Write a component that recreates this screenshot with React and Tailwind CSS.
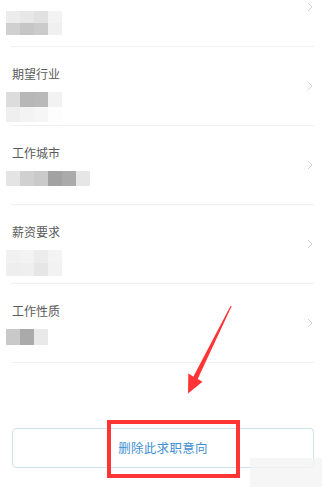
import React from "react";

const Chevron = () => (
  <svg width="6" height="10" viewBox="0 0 6 10" className="shrink-0">
    <path d="M1 1 L5 5 L1 9" fill="none" stroke="#d2d2d2" strokeWidth="1" />
  </svg>
);

const Mosaic = ({ rows, w = 14, h = 13 }) => (
  <div className="flex flex-col -ml-[6px]">
    {rows.map((r, i) => (
      <div key={i} className="flex">
        {r.map((c, j) => (
          <div key={j} style={{ background: c, width: w, height: h }} />
        ))}
      </div>
    ))}
  </div>
);

const Row = ({ label, mosaic, h = 14 }) => (
  <div className="ml-[11px] mr-[13px] h-[79px] flex items-center border-b border-[#f1f1f1]">
    <div className="flex-1 self-stretch pt-[19px] pl-[1px]">
      <div className="text-[12px] leading-4 text-[#5a5a5a]">{label}</div>
      <div className="mt-[10px]">
        <Mosaic rows={mosaic} h={h} />
      </div>
    </div>
    <div className="pr-[2px]">
      <Chevron />
    </div>
  </div>
);

export default function App() {
  return (
    <div
      className="relative w-[328px] h-[487px] bg-white overflow-hidden"
      style={{ fontFamily: '"Noto Sans CJK SC", "Noto Sans", sans-serif' }}
    >
      <div className="-mt-[32px]">
        <div className="ml-[11px] mr-[13px] h-[79px] flex items-center border-b border-[#f1f1f1]">
          <div className="flex-1 self-stretch pt-[43px] pl-[1px]">
            <Mosaic
              h={12}
              rows={[
                ["#ececec", "#e7e7e7", "#e1e1e1", "#f3f3f3"],
                ["#d0d0d0", "#c6c6c6", "#cbcbcb", "#f0f0f0"],
              ]}
            />
          </div>
          <div className="pr-[2px]">
            <Chevron />
          </div>
        </div>
        <Row
          label="期望行业"
          h={15}
          mosaic={[
            ["#dcdcdc", "#b7b7b7", "#b9b9b9", "#f2f2f2"],
            ["#efefef", "#f3f3f3", "#f6f6f6", "#fdfdfd"],
          ]}
        />
        <Row
          label="工作城市"
          h={15}
          mosaic={[["#e4e4e4", "#d0d0d0", "#cacaca", "#a2a2a2", "#aaaaaa", "#e6e6e6"]]}
        />
        <Row
          label="薪资要求"
          h={13}
          mosaic={[
            ["#f1f1f1", "#f3f3f3", "#ececec", "#f4f4f4"],
            ["#eeeeee", "#efefef", "#e6e6e6", "#f2f2f2"],
          ]}
        />
        <Row
          label="工作性质"
          h={16}
          mosaic={[["#c9c9c9", "#aaaaaa", "#e9e9e9"]]}
        />
      </div>

      <div className="mt-[65px] ml-[12px] mr-[14px]">
        <div className="h-[40px] rounded-[4px] border border-[#cde2ea] flex items-center justify-center">
          <span className="text-[12.5px] text-[#3f8fd4] tracking-[0.3px]">删除此求职意向</span>
        </div>
      </div>

      {/* faint blur patch bottom-right */}
      <div className="absolute left-[250px] top-[458px] w-[72px] h-[29px] bg-[#f4f4f4] opacity-80" />

      {/* red annotation box */}
      <div className="absolute left-[107px] top-[420px] w-[133px] h-[58px] border-[4px] border-[#ff3535]" />

      {/* red arrow */}
      <svg className="absolute inset-0 pointer-events-none" width="328" height="487" viewBox="0 0 328 487">
        <polygon
          points="231.6,306.3 197.7,378.9 202.5,381.8 188,393.5 188.3,373.3 193.3,376.7 230.6,305.7"
          fill="#ff3535"
        />
      </svg>
    </div>
  );
}
